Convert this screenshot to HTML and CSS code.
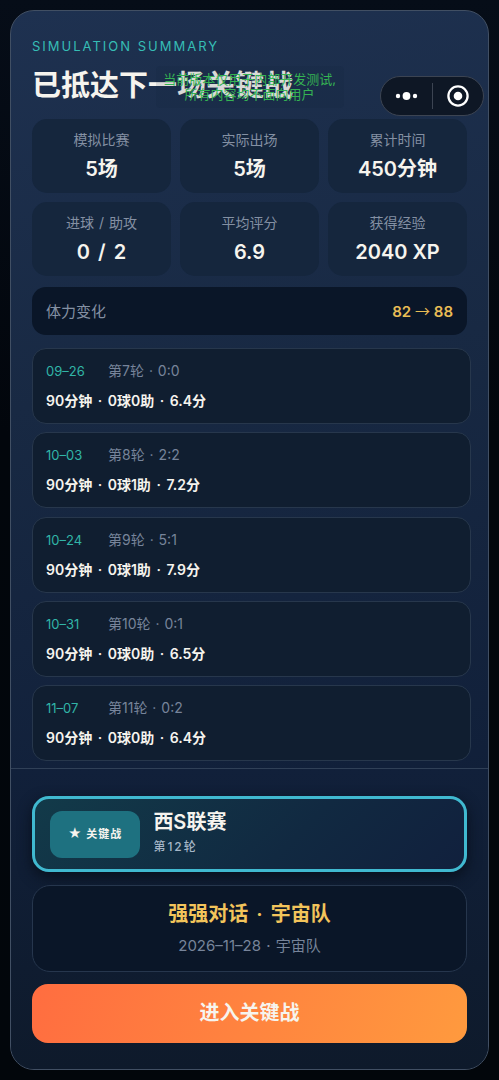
FILE: index.html
```html
<!DOCTYPE html>
<html lang="zh-CN">
<head>
<meta charset="utf-8">
<meta name="viewport" content="width=device-width, initial-scale=1">
<title>已抵达下一场关键战</title>
<link rel="stylesheet" href="styles.css">
</head>
<body>
<main class="panel">
  <section class="summary">
    <header>
      <p class="eyebrow">SIMULATION SUMMARY</p>
      <h1 class="title">已抵达下一场关键战</h1>
    </header>
    <dl class="stats">
      <div class="stat"><dt>模拟比赛</dt><dd>5场</dd></div>
      <div class="stat"><dt>实际出场</dt><dd>5场</dd></div>
      <div class="stat"><dt>累计时间</dt><dd>450分钟</dd></div>
      <div class="stat"><dt>进球 <span class="slash">/</span> 助攻</dt><dd>0 <span class="slash wide">/</span> 2</dd></div>
      <div class="stat"><dt>平均评分</dt><dd>6.9</dd></div>
      <div class="stat"><dt>获得经验</dt><dd>2040 XP</dd></div>
    </dl>
    <div class="stamina"><span>体力变化</span><strong>82 <i class="arrow">→</i> 88</strong></div>
    <ul class="matches">
      <li class="match"><p class="match-meta"><time>09–26</time><span>第7轮 <i class="dot">·</i> 0:0</span></p><p class="match-line">90分钟 <i class="dot wide">·</i> 0球0助 <i class="dot wide">·</i> 6.4分</p></li>
      <li class="match"><p class="match-meta"><time>10–03</time><span>第8轮 <i class="dot">·</i> 2:2</span></p><p class="match-line">90分钟 <i class="dot wide">·</i> 0球1助 <i class="dot wide">·</i> 7.2分</p></li>
      <li class="match"><p class="match-meta"><time>10–24</time><span>第9轮 <i class="dot">·</i> 5:1</span></p><p class="match-line">90分钟 <i class="dot wide">·</i> 0球1助 <i class="dot wide">·</i> 7.9分</p></li>
      <li class="match"><p class="match-meta"><time>10–31</time><span>第10轮 <i class="dot">·</i> 0:1</span></p><p class="match-line">90分钟 <i class="dot wide">·</i> 0球0助 <i class="dot wide">·</i> 6.5分</p></li>
      <li class="match"><p class="match-meta"><time>11–07</time><span>第11轮 <i class="dot">·</i> 0:2</span></p><p class="match-line">90分钟 <i class="dot wide">·</i> 0球0助 <i class="dot wide">·</i> 6.4分</p></li>
    </ul>
  </section>
  <footer class="next">
    <div class="league">
      <span class="badge"><span class="star">★</span> 关键战</span>
      <div>
        <h2 class="league-name">西S联赛</h2>
        <p class="league-round">第12轮</p>
      </div>
    </div>
    <div class="rival">
      <h3 class="rival-title">强强对话 <i class="dot broad">·</i> 宇宙队</h3>
      <p class="rival-date">2026–11–28 <i class="dot">·</i> 宇宙队</p>
    </div>
    <button class="enter" type="button">进入关键战</button>
  </footer>
</main>
<p class="notice">当前版本仅用于内部开发测试,<br>所有内容均不面向用户</p>
<div class="capsule">
  <button type="button" aria-label="更多">
    <svg width="24" height="10" viewBox="0 0 24 10"><g fill="#fff"><circle cx="3" cy="5" r="2.2"/><circle cx="11.5" cy="5" r="3.9"/><circle cx="20" cy="5" r="2.2"/></g></svg>
  </button>
  <button type="button" aria-label="关闭">
    <svg width="22" height="22" viewBox="0 0 22 22"><circle cx="11" cy="11" r="9.6" fill="none" stroke="#fff" stroke-width="2.3"/><circle cx="11" cy="11" r="4.3" fill="#fff"/></svg>
  </button>
</div>
</body>
</html>
```
FILE: styles.css
```css
* { box-sizing: border-box; margin: 0; padding: 0; }

body {
  position: relative;
  display: flex;
  min-height: 100vh;
  padding: 10px;
  background: linear-gradient(#060d18, #02060c 40%, #02060b);
  color: #f6f4ee;
  font-family: Inter, "Noto Sans CJK SC", sans-serif;
  font-size: 14px;
  line-height: 20px;
}

button { border: 0; background: none; color: inherit; font: inherit; cursor: pointer; }

/* Separators inside text lines */
.dot { margin: 0 1px; font-style: normal; }
.dot.wide { margin: 0 2px; }
.dot.broad { margin: 0 3px; }
.slash { margin: 0 1px; }
.slash.wide { margin: 0 3px; }
.arrow { font-family: "Noto Sans CJK SC", sans-serif; font-style: normal; font-weight: 400; }

.panel {
  display: flex;
  flex: 1;
  flex-direction: column;
  min-width: 0;
  overflow: hidden;
  border: 1px solid #414f63;
  border-radius: 24px;
  background: linear-gradient(170deg, #1e3150 0%, #182943 35%, #11203a 72%, #0e1a2b 100%);
}

.summary {
  display: flex;
  flex: 1;
  flex-direction: column;
  padding: 24px 21px 7px;
}

.eyebrow { color: #36bdb5; font-size: 13px; letter-spacing: 2px; line-height: 22px; }
.title { margin-top: 9px; font-size: 29px; font-weight: 600; line-height: 40px; }

.stats {
  display: grid;
  grid-template-columns: repeat(3, 1fr);
  gap: 9px;
  margin-top: 13px;
}

.stat {
  padding: 10px 4px;
  border-radius: 15px;
  background: #15263d;
  text-align: center;
}
.stat dt { color: #8490a3; line-height: 22px; }
.stat dd { margin-top: 4px; font-size: 20px; font-weight: 600; line-height: 28px; }

.stamina {
  display: flex;
  align-items: center;
  justify-content: space-between;
  margin-top: 11px;
  padding: 12px 14px;
  border-radius: 14px;
  background: #0a1628;
  font-size: 15px;
  line-height: 23px;
}
.stamina span { color: #8490a3; }
.stamina strong { color: #e9bd55; font-weight: 600; }

.matches {
  display: flex;
  flex: 1;
  flex-direction: column;
  justify-content: space-between;
  gap: 8px;
  margin: 13px -4px 0 0;
  list-style: none;
}
.match {
  padding: 12px 13px;
  border: 1px solid #27374c;
  border-radius: 14px;
  background: #101e30;
}
.match-meta { display: flex; color: #77849a; }
.match-meta time { width: 62px; color: #31b5a7; font-size: 13px; }
.match-line { margin-top: 10px; font-weight: 600; }

.next {
  display: flex;
  flex-direction: column;
  gap: 12px;
  padding: 27px 21px 26px;
  border-top: 1px solid #304057;
  background: linear-gradient(#11203a, #0e1a2b);
}

.league {
  display: flex;
  align-items: center;
  gap: 13px;
  padding: 10px 15px;
  border: 3px solid #40b9d0;
  border-radius: 17px;
  background: linear-gradient(135deg, #123a49, #112941 60%, #11203d);
  box-shadow: 0 5px 14px #08101c;
}
.badge {
  padding: 12px 18px 14px;
  border-radius: 12px;
  background: #1e7180;
  font-size: 11px;
  font-weight: 600;
  letter-spacing: 1px;
}
.star { font-size: 13px; }
.league-name { font-size: 20px; font-weight: 600; line-height: 26px; }
.league-round { color: #a5b6c6; font-size: 12px; font-weight: 500; letter-spacing: 2px; line-height: 24px; }

.rival {
  margin-top: 1px;
  padding: 14px 12px;
  border: 1px solid #26364d;
  border-radius: 18px;
  background: #0a1628;
  text-align: center;
}
.rival-title { color: #f2c45b; font-size: 20px; font-weight: 600; line-height: 28px; }
.rival-date { margin-top: 7px; color: #77849a; font-size: 15px; line-height: 22px; }

.enter {
  padding: 15px;
  border-radius: 16px;
  background: linear-gradient(110deg, #ff6d40, #ff9a3e);
  font-size: 20px;
  font-weight: 600;
  line-height: 29px;
}

/* Overlays drawn above the panel */
.notice {
  position: absolute;
  top: 66px;
  left: 50%;
  width: 188px;
  padding: 6px 0;
  transform: translateX(-50%);
  border-radius: 4px;
  background: rgba(20, 34, 60, .12);
  color: #35b353;
  font-size: 13px;
  line-height: 15px;
  text-align: center;
  white-space: nowrap;
}

.capsule {
  position: absolute;
  top: 76px;
  right: 15px;
  display: flex;
  width: 104px;
  height: 40px;
  border: 1px solid #3c4452;
  border-radius: 20px;
  background: #0e1725;
}
.capsule button { display: flex; flex: 1; align-items: center; justify-content: center; position: relative; }
.capsule button + button::before {
  content: "";
  position: absolute;
  top: 6px;
  bottom: 6px;
  left: 0;
  width: 1px;
  background: #3c4452;
}
```
